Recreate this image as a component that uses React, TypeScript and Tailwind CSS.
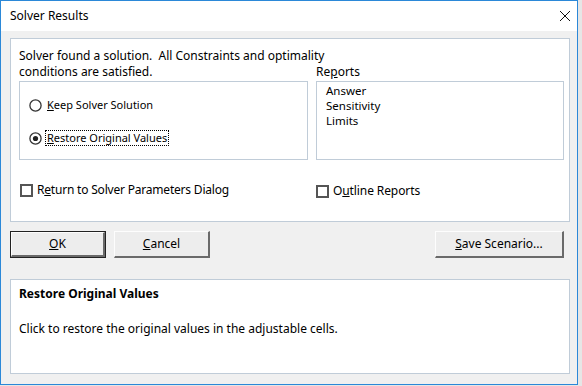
import React from "react";

const font = { fontFamily: '"Noto Sans", "Open Sans", sans-serif' };

function Radio({ checked }: { checked?: boolean }) {
  return (
    <svg width="13" height="13" viewBox="0 0 13 13" className="shrink-0">
      <circle cx="6.5" cy="6.5" r="5.6" fill="#fff" stroke="#333" strokeWidth="1.3" />
      {checked && <circle cx="6.5" cy="6.5" r="2.6" fill="#222" />}
    </svg>
  );
}

function Check() {
  return <div className="w-[13px] h-[13px] shrink-0 bg-white border-2 border-[#555]" />;
}

function Btn({ children, w, def }: { children: React.ReactNode; w: string; def?: boolean }) {
  return (
    <div className={`${w} h-[27px] ${def ? "border border-[#222]" : ""}`}>
      <div className="w-full h-full flex items-center justify-center bg-[#ededed] border-t border-l border-t-[#fdfdfd] border-l-[#fdfdfd] border-b-2 border-r-2 border-b-[#6a6a6a] border-r-[#6a6a6a] text-[12px] text-black">
        {children}
      </div>
    </div>
  );
}

export default function App() {
  return (
    <div className="w-[582px] h-[386px] bg-[#e6e6e6] overflow-hidden" style={font}>
      <div className="w-[578px] h-[385px] border border-[#2b88d8] bg-[#f0f0f0] flex flex-col">
        {/* Title bar */}
        <div className="h-[30px] bg-white flex items-center justify-between pl-[9px] shrink-0">
          <span className="text-[12px] text-black leading-none">Solver Results</span>
          <svg width="24" height="24" viewBox="0 0 24 24">
            <path d="M7 7 L17 17 M17 7 L7 17" stroke="#111" strokeWidth="1" />
          </svg>
        </div>
        {/* Body */}
        <div className="pl-[9px] pt-[7px] flex flex-col">
          {/* Top panel */}
          <div className="w-[560px] h-[184px] bg-white border border-[#c0ccd8] pl-[8px] pt-[9px] text-[12px] text-black">
            <div className="flex">
              <div className="w-[289px]">
                <div className="leading-[16px] whitespace-nowrap">
                  Solver found a solution.&nbsp; All Constraints and optimality
                </div>
                <div className="leading-[16px] whitespace-nowrap">conditions are satisfied.</div>
                <div className="mt-[1px] h-[79px] border border-[#c0ccd8] pl-[9px] pt-[16px] text-[11px]">
                  <div className="flex items-center gap-[5px] h-[14px]">
                    <Radio />
                    <span><u>K</u>eep Solver Solution</span>
                  </div>
                  <div className="flex items-center gap-[3px] h-[16px] mt-[18px]">
                    <Radio checked />
                    <span className="border border-dotted border-black px-[1px] leading-[14px]">
                      <u>R</u>estore Original Values
                    </span>
                  </div>
                </div>
              </div>
              <div className="ml-[8px] pt-[16px]">
                <div className="leading-[16px]">
                  Re<u>p</u>orts
                </div>
                <div className="mt-[1px] w-[248px] h-[79px] border border-[#c0ccd8] pl-[9px] pt-[1px] text-[11.5px]">
                  <div className="h-[15px] leading-[15px]">Answer</div>
                  <div className="h-[15px] leading-[15px]">Sensitivity</div>
                  <div className="h-[15px] leading-[15px]">Limits</div>
                </div>
              </div>
            </div>
            <div className="flex mt-[22px]">
              <div className="w-[297px] flex items-center gap-[4px] pl-[1px]">
                <Check />
                <span className="leading-[14px] tracking-[-0.2px]">
                  R<u>e</u>turn to Solver Parameters Dialog
                </span>
              </div>
              <div className="flex items-center gap-[4px] mt-[2px]">
                <Check />
                <span className="leading-[14px] tracking-[-0.1px]">
                  O<u>u</u>tline Reports
                </span>
              </div>
            </div>
          </div>
          {/* Buttons */}
          <div className="flex items-center mt-[9px] w-[554px]">
            <Btn w="w-[96px]" def>
              <u>O</u>K
            </Btn>
            <div className="ml-[8px]">
              <Btn w="w-[96px]">
                <u>C</u>ancel
              </Btn>
            </div>
            <div className="ml-auto">
              <Btn w="w-[129px]">
                <u>S</u>ave Scenario...
              </Btn>
            </div>
          </div>
          {/* Bottom panel */}
          <div className="mt-[21px] w-[560px] h-[95px] bg-white border border-[#c0ccd8] pl-[8px] pt-[6px] text-[12px] text-black">
            <div className="font-bold leading-[16px]">Restore Original Values</div>
            <div className="leading-[16px] mt-[19px]">
              Click to restore the original values in the adjustable cells.
            </div>
          </div>
        </div>
      </div>
    </div>
  );
}
